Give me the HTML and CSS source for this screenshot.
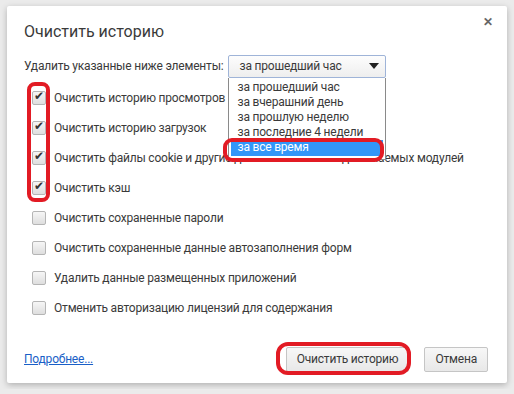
FILE: index.html
```html
<!DOCTYPE html>
<html lang="ru">
<head>
    <meta charset="UTF-8">
    <title>Очистить историю</title>
    <link rel="stylesheet" href="styles.css">
</head>
<body>
    <div class="dialog">
        <div class="header">
            <h2>Очистить историю</h2>
            <span class="close">&#x2715;</span>
        </div>

        <div class="period-row">
            <label>Удалить указанные ниже элементы:</label>
            <div class="select-wrap">
                <div class="select">
                    <span>за прошедший час</span>
                    <span class="arrow"></span>
                </div>
                <ul class="options">
                    <li>за прошедший час</li>
                    <li>за вчерашний день</li>
                    <li>за прошлую неделю</li>
                    <li>за последние 4 недели</li>
                    <li class="selected">за все время</li>
                </ul>
                <div class="mark mark-option"></div>
            </div>
        </div>

        <div class="items">
            <div class="mark mark-checks"></div>
            <div class="item"><span class="box checked"></span>Очистить историю просмотров</div>
            <div class="item"><span class="box checked"></span>Очистить историю загрузок</div>
            <div class="item"><span class="box checked"></span>Очистить файлы cookie и другие данные сайтов и подключаемых модулей</div>
            <div class="item"><span class="box checked"></span>Очистить кэш</div>
            <div class="item"><span class="box"></span>Очистить сохраненные пароли</div>
            <div class="item"><span class="box"></span>Очистить сохраненные данные автозаполнения форм</div>
            <div class="item"><span class="box"></span>Удалить данные размещенных приложений</div>
            <div class="item"><span class="box"></span>Отменить авторизацию лицензий для содержания</div>
        </div>

        <div class="footer">
            <a href="#">Подробнее...</a>
            <div class="buttons">
                <button>Очистить историю</button>
                <button>Отмена</button>
                <div class="mark mark-button"></div>
            </div>
        </div>
    </div>
</body>
</html>
```

FILE: styles.css
```css
body {
    font-family: Roboto, "Open Sans", Arial, sans-serif;
    font-size: 12px;
    letter-spacing: -0.2px;
    color: #3a3a3a;
    background-color: #ebebeb;
    margin: 0;
    padding: 6px 7px;
}

.dialog {
    position: relative;
    width: 466px;
    height: 358px;
    background: white;
    border-radius: 2px;
    padding: 16px 17px 3px 17px;
    box-shadow: 0 2px 6px rgba(0, 0, 0, 0.25);
    display: flex;
    flex-direction: column;
}

.header {
    display: flex;
    justify-content: space-between;
    align-items: flex-start;
    height: 33px;
}

h2 {
    margin: 0;
    font-size: 16px;
    font-weight: normal;
    letter-spacing: 0;
    color: #3a3a3a;
}

.close {
    font-size: 12px;
    font-weight: bold;
    color: #666;
    margin: -7px -3px 0 0;
}

.period-row {
    display: flex;
    align-items: center;
    height: 22px;
    white-space: nowrap;
}

.period-row label {
    margin-right: 5px;
}

.select-wrap {
    position: relative;
}

.select {
    width: 140px;
    height: 21px;
    padding: 0 6px 0 10px;
    border: 1px solid #9fb4d8;
    border-radius: 2px;
    background: linear-gradient(#fdfdfd, #eeeeee);
    display: flex;
    justify-content: space-between;
    align-items: center;
}

.arrow {
    width: 0;
    height: 0;
    border-left: 5px solid transparent;
    border-right: 5px solid transparent;
    border-top: 6px solid #222;
}

.options {
    position: absolute;
    top: 23px;
    left: 0;
    width: 152px;
    margin: 0;
    padding: 2px 2px 3px 2px;
    list-style: none;
    background: white;
    border: 1px solid #8a8a8a;
    border-top: none;
    z-index: 2;
}

.options li {
    height: 15px;
    line-height: 15px;
    padding-left: 6px;
}

.options li.selected {
    background: #3296f8;
    color: white;
    height: 16px;
}

.mark {
    position: absolute;
    border: 4px solid #e21b24;
    z-index: 3;
}

.mark-option {
    left: -5px;
    top: 83px;
    width: 153px;
    height: 16px;
    border-radius: 9px;
}

.items {
    position: relative;
    margin-top: 6px;
    white-space: nowrap;
}

.mark-checks {
    left: 3px;
    top: -1px;
    width: 15px;
    height: 112px;
    border-radius: 8px;
}

.item {
    display: flex;
    align-items: center;
    height: 30px;
}

.box {
    width: 12px;
    height: 12px;
    margin: 0 8px 0 8px;
    border: 1px solid #b5b5b5;
    border-radius: 2px;
    background: linear-gradient(#f6f6f6, #dedede);
    position: relative;
    flex: none;
}

.box.checked::after {
    content: "\2714";
    position: absolute;
    left: 1px;
    top: -3px;
    font-size: 12px;
    color: #333;
}

.footer {
    margin-top: auto;
    display: flex;
    justify-content: space-between;
    align-items: center;
    height: 42px;
}

.footer a {
    color: #1a5fc7;
}

.buttons {
    position: relative;
    display: flex;
    gap: 15px;
    margin-right: 2px;
}

button {
    font-family: inherit;
    font-size: 12px;
    letter-spacing: -0.2px;
    color: #3a3a3a;
    height: 25px;
    padding: 0 10px;
    border: 1px solid #c5c5c5;
    border-radius: 2px;
    background: linear-gradient(#f7f7f7, #e8e8e8);
}

.mark-button {
    left: -10px;
    top: -5px;
    width: 127px;
    height: 25px;
    border-radius: 12px;
}
```
